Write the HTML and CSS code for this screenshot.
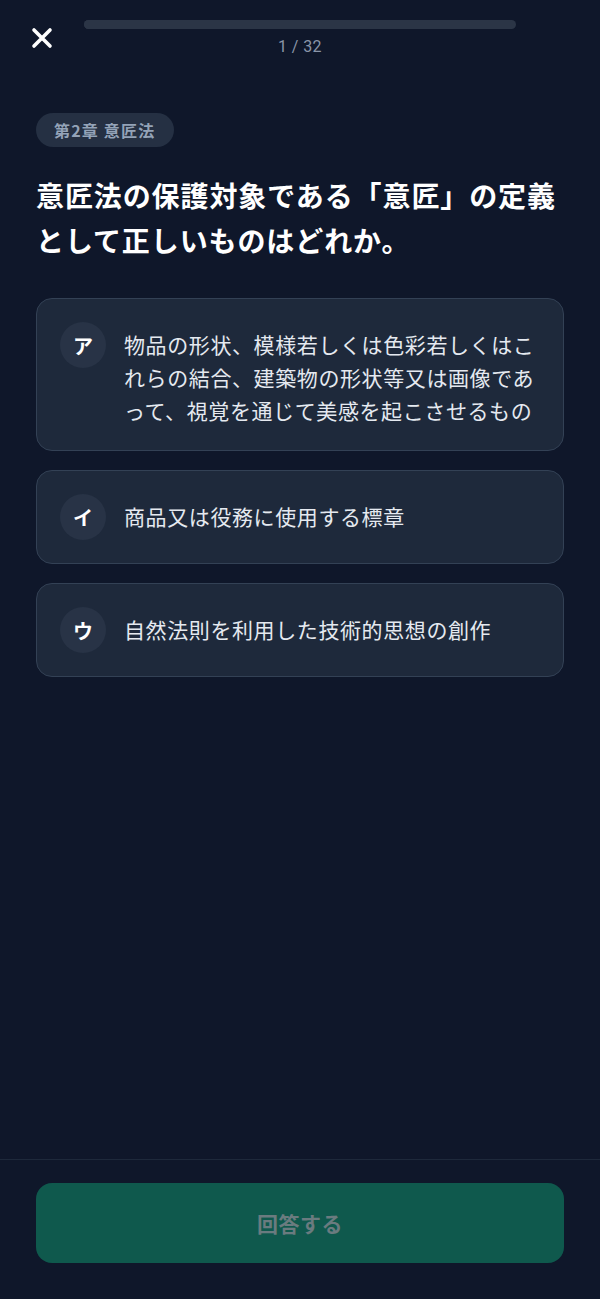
FILE: index.html
```html
<!DOCTYPE html>
<html lang="ja">
<head>
<meta charset="utf-8">
<title>意匠法 クイズ</title>
<link rel="stylesheet" href="styles.css">
</head>
<body>
<div class="app">
  <header class="topbar">
    <button class="close" aria-label="閉じる">
      <svg width="22" height="22" viewBox="0 0 22 22"><path d="M3 3 L19 19 M19 3 L3 19" stroke="#ffffff" stroke-width="3.6" stroke-linecap="round" fill="none"/></svg>
    </button>
    <div class="progress">
      <div class="track"><div class="fill" style="width: 3.125%"></div></div>
      <div class="count">1 / 32</div>
    </div>
  </header>

  <main class="content">
    <span class="badge">第2章 意匠法</span>
    <h1 class="question">意匠法の保護対象である「意匠」の定義として正しいものはどれか。</h1>

    <ul class="options">
      <li class="option">
        <span class="mark">ア</span>
        <span class="text">物品の形状、模様若しくは色彩若しくはこれらの結合、建築物の形状等又は画像であって、視覚を通じて美感を起こさせるもの</span>
      </li>
      <li class="option">
        <span class="mark">イ</span>
        <span class="text">商品又は役務に使用する標章</span>
      </li>
      <li class="option">
        <span class="mark">ウ</span>
        <span class="text">自然法則を利用した技術的思想の創作</span>
      </li>
    </ul>
  </main>

  <footer class="footer">
    <button class="submit" disabled>回答する</button>
  </footer>
</div>
</body>
</html>
```

FILE: styles.css
```css
* { box-sizing: border-box; }
html, body {
  margin: 0;
  padding: 0;
  background: #0f172a;
}
body {
  font-family: "Noto Sans CJK JP", "Noto Sans", sans-serif;
  color: #f1f5f9;
}
.app {
  height: 1299px;
  display: flex;
  flex-direction: column;
}
.topbar {
  display: flex;
  align-items: flex-start;
  padding: 20px 84px 0 31px;
  gap: 31px;
}
.close {
  width: 22px;
  height: 22px;
  margin-top: 7px;
  padding: 0;
  border: 0;
  background: none;
  display: flex;
}
.progress {
  flex: 1;
  display: flex;
  flex-direction: column;
  align-items: center;
}
.track {
  width: 100%;
  height: 9px;
  border-radius: 5px;
  background: #2b3546;
  overflow: hidden;
}
.fill {
  height: 100%;
  background: #2b3546;
}
.count {
  margin-top: 7px;
  font-family: "Roboto", "Noto Sans", sans-serif;
  font-size: 16px;
  line-height: 22px;
  color: #8a95a8;
  letter-spacing: 0.4px;
}
.content {
  flex: 1;
  padding: 55px 36px 0;
}
.badge {
  display: inline-block;
  height: 34px;
  padding: 0 19px 0 18px;
  border-radius: 17px;
  background: #253043;
  color: #94a3b8;
  font-size: 16px;
  letter-spacing: 1.2px;
  font-weight: 700;
  line-height: 34px;
}
.question {
  margin: 26px 0 0;
  font-size: 28px;
  letter-spacing: 0.9px;
  line-height: 45px;
  font-weight: 700;
  color: #ffffff;
}
.options {
  list-style: none;
  margin: 35px 0 0;
  padding: 0;
  display: flex;
  flex-direction: column;
  gap: 19px;
}
.option {
  display: flex;
  align-items: flex-start;
  gap: 18px;
  padding: 23px;
  border: 1px solid #334155;
  border-radius: 16px;
  background: #1e293b;
}
.mark {
  flex: none;
  width: 46px;
  height: 46px;
  border-radius: 50%;
  background: #283346;
  display: flex;
  align-items: center;
  justify-content: center;
  font-size: 20px;
  font-weight: 700;
  color: #ffffff;
}
.text {
  flex: 1;
  padding-top: 6px;
  font-size: 21px;
  letter-spacing: 0.6px;
  line-height: 33px;
  color: #e5e9f0;
}
.footer {
  border-top: 1px solid #1e293b;
  padding: 23px 36px 36px;
}
.submit {
  width: 100%;
  height: 80px;
  border: 0;
  border-radius: 16px;
  background: #0f594d;
  color: #6a7b7f;
  font-family: "Noto Sans CJK JP", "Noto Sans", sans-serif;
  font-size: 21px;
  letter-spacing: 0.5px;
  font-weight: 700;
}
```
